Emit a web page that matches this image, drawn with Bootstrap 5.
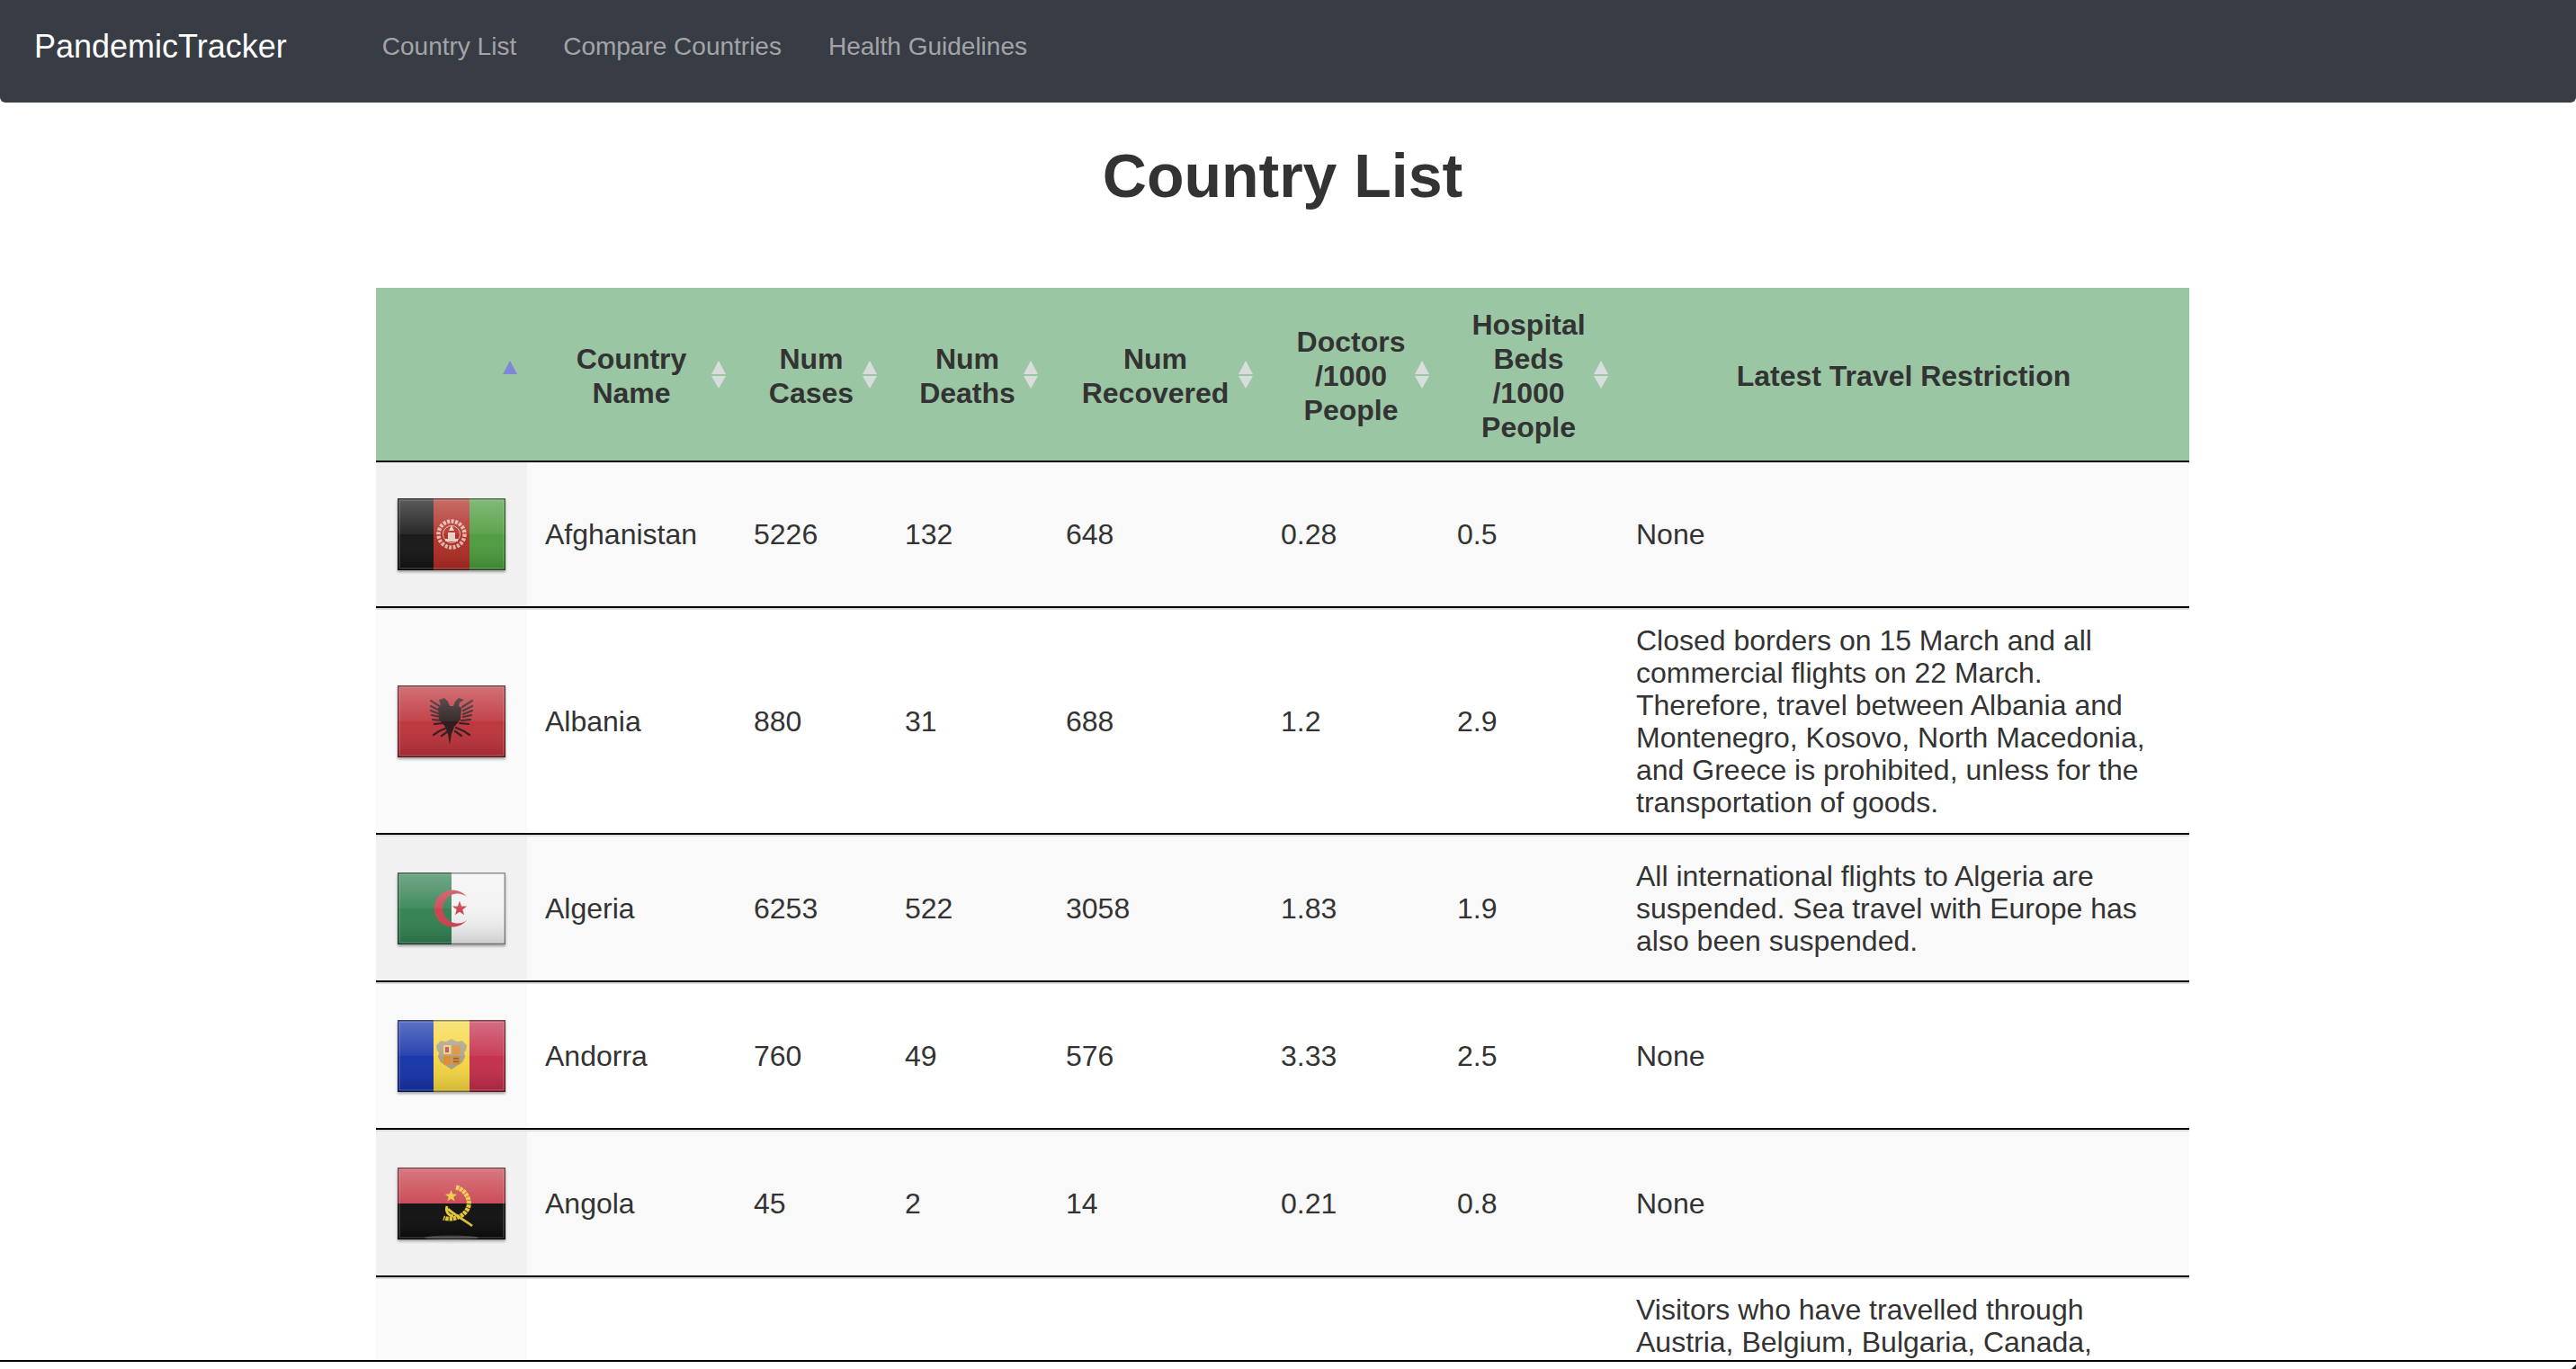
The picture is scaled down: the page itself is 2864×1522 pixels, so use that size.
<!DOCTYPE html>
<html lang="en">
<head>
    <meta charset="UTF-8">
    <meta name="viewport" content="width=device-width, initial-scale=1">
    <title>PandemicTracker - Country List</title>
    <link rel="stylesheet" href="https://cdn.jsdelivr.net/npm/bootstrap@5.3.0/dist/css/bootstrap.min.css">
    <style>
        html, body { height: 100%; }
        body {
            font-family: "Liberation Sans", Arial, sans-serif;
            color: #333;
            overflow: hidden;
        }
        .page-shell { height: 100vh; }
        .page-body { min-height: 0; overflow: hidden; }
        .window-edge { height: 10px; border-top: 2px solid #000; flex: none; }

        .top-nav {
            height: 114px;
            padding: 0 0 10px 38px;
            background-color: #383c44;
            border-radius: 0 0 6px 6px;
            flex: none;
        }
        .top-nav .navbar-brand { font-size: 36px; padding: 0; margin-right: 80px; }
        .top-nav .navbar-nav .nav-link { font-size: 28px; padding: 0 26px; }

        .content-wrap { width: 2016px; margin-left: 418px; }
        .page-title { font-size: 68px; font-weight: 700; line-height: 82px; margin: 40px 0 84px; color: #333; }

        .country-table {
            width: 2016px;
            table-layout: fixed;
            border-collapse: separate;
            border-spacing: 0;
            margin: 0;
            font-size: 32px;
            line-height: 36px;
            --bs-table-color: #333;
        }
        .country-table col:nth-child(1) { width: 168px; }
        .country-table col:nth-child(2) { width: 232px; }
        .country-table col:nth-child(3) { width: 168px; }
        .country-table col:nth-child(4) { width: 179px; }
        .country-table col:nth-child(5) { width: 239px; }
        .country-table col:nth-child(6) { width: 196px; }
        .country-table col:nth-child(7) { width: 199px; }
        .country-table col:nth-child(8) { width: 635px; }

        .country-table > thead > tr > th {
            position: relative;
            height: 194px;
            padding: 22px 36px 18px;
            line-height: 38px;
            text-align: center;
            vertical-align: middle;
            font-weight: 700;
            background-color: #9bc6a3;
            border-bottom: 2px solid #000;
        }
        .sort-both::before, .sort-both::after, .sort-up::before {
            content: "";
            position: absolute;
            right: 11px;
            border-left: 8px solid transparent;
            border-right: 8px solid transparent;
        }
        .sort-both::before, .sort-up::before { top: calc(50% - 15px); border-bottom: 15px solid #d8dedb; }
        .sort-both::after { top: calc(50% + 2px); border-top: 14px solid #d8dedb; }
        .sort-up::before { border-bottom-color: #7d88d8; }

        .country-table > tbody > tr > td {
            padding: 16px 20px;
            vertical-align: middle;
            background-color: #fff;
            border-top: 2px solid #ddd;
            border-bottom: 2px solid #000;
        }
        .country-table > tbody > tr:first-child > td { border-top: 0; }
        .country-table > tbody > tr:nth-child(odd) > td { background-color: #f9f9f9; }
        .country-table > tbody > tr > td:first-child { background-color: #fafafa; }
        .country-table > tbody > tr:nth-child(odd) > td:first-child { background-color: #f1f1f1; }
        .country-table > tbody > tr.cut-row > td { height: 300px; vertical-align: top; background-color: #fff; }
        .country-table > tbody > tr.cut-row > td:first-child { background-color: #fafafa; }

        .flag-img {
            display: block;
            width: 128px;
            height: 128px;
            filter: blur(.6px) drop-shadow(0 2px 1.5px rgba(0, 0, 0, .35));
        }
    </style>
</head>
<body>
    <svg class="position-absolute" width="0" height="0" aria-hidden="true">
        <defs>
            <linearGradient id="glossFill" x1="0" y1="0" x2="0" y2="1">
                <stop offset="0" stop-color="#fff" stop-opacity=".32"/>
                <stop offset=".5" stop-color="#fff" stop-opacity=".1"/>
                <stop offset=".5" stop-color="#fff" stop-opacity=".04"/>
                <stop offset="1" stop-color="#000" stop-opacity=".16"/>
            </linearGradient>
            <g id="flagGloss">
                <rect x="4" y="24" width="120" height="80" fill="url(#glossFill)"/>
                <rect x="6" y="26" width="116" height="76" fill="none" stroke="#fff" stroke-opacity=".2" stroke-width="1.5"/>
                <rect x="4.75" y="24.75" width="118.5" height="78.5" fill="none" stroke="#000" stroke-opacity=".42" stroke-width="1.5"/>
            </g>
        </defs>
    </svg>

    <div class="page-shell d-flex flex-column">
        <nav class="navbar navbar-expand navbar-dark top-nav">
            <a class="navbar-brand" href="#">PandemicTracker</a>
            <ul class="navbar-nav">
                <li class="nav-item"><a class="nav-link" href="#">Country List</a></li>
                <li class="nav-item"><a class="nav-link" href="#">Compare Countries</a></li>
                <li class="nav-item"><a class="nav-link" href="#">Health Guidelines</a></li>
            </ul>
        </nav>

        <div class="page-body flex-grow-1">
            <div class="content-wrap">
                <h1 class="page-title text-center">Country List</h1>
                <table class="table country-table">
                    <colgroup><col><col><col><col><col><col><col><col></colgroup>
                    <thead>
                        <tr>
                            <th class="sort-up"></th>
                            <th class="sort-both">Country Name</th>
                            <th class="sort-both">Num Cases</th>
                            <th class="sort-both">Num Deaths</th>
                            <th class="sort-both">Num Recovered</th>
                            <th class="sort-both">Doctors /1000 People</th>
                            <th class="sort-both">Hospital Beds /1000 People</th>
                            <th>Latest Travel Restriction</th>
                        </tr>
                    </thead>
                    <tbody>
                        <tr>
                            <td>
                                <svg class="flag-img" viewBox="0 0 128 128" role="img" aria-label="Flag of Afghanistan">
                                    <rect x="4" y="24" width="40" height="80" fill="#111"/>
                                    <rect x="44" y="24" width="40" height="80" fill="#ae2a22"/>
                                    <rect x="84" y="24" width="40" height="80" fill="#4a9a3a"/>
                                    <circle cx="64" cy="64" r="14.500" fill="none" stroke="#dfb8aa" stroke-width="4.500" stroke-dasharray="3 1.500"/>
                                    <circle cx="64" cy="64" r="9.500" fill="none" stroke="#dfb8aa" stroke-width="1"/>
                                    <path d="M64 54l3 6h-6zM57 69h14v3H57zM60 62h8v7h-8z" fill="#e9cfc4"/>
                                    <use href="#flagGloss"/>
                                </svg>
                            </td>
                            <td>Afghanistan</td><td>5226</td><td>132</td><td>648</td><td>0.28</td><td>0.5</td><td>None</td>
                        </tr>
                        <tr>
                            <td>
                                <svg class="flag-img" viewBox="0 0 128 128" role="img" aria-label="Flag of Albania">
                                    <rect x="4" y="24" width="120" height="80" fill="#bc2f37"/>
                                    <path d="M50 40l6-2 4 4 2 5h4l2-5 4-4 6 2-5 3-1 4 3 2-1 13-7 8-3 8-2 12-2-12-3-8-7-8-1-13 3-2-1-4z" fill="#241415"/>
                                    <g fill="none" stroke="#2b1718" stroke-width="2.200" stroke-linecap="round">
                                        <path d="M52 48L41 41M51 52L41 47M51 56L41 52M51 59L42 57M53 63L43 62M55 66L45 67"/>
                                        <path d="M76 48L87 41M77 52L87 47M77 56L87 52M77 59L86 57M75 63L85 62M73 66L83 67"/>
                                        <path d="M59 71L50 75L44 79M60 75L53 80M69 71L78 75L84 79M68 75L75 80"/>
                                    </g>
                                    <use href="#flagGloss"/>
                                </svg>
                            </td>
                            <td>Albania</td><td>880</td><td>31</td><td>688</td><td>1.2</td><td>2.9</td>
                            <td>Closed borders on 15 March and all commercial flights on 22 March. Therefore, travel between Albania and Montenegro, Kosovo, North Macedonia, and Greece is prohibited, unless for the transportation of goods.</td>
                        </tr>
                        <tr>
                            <td>
                                <svg class="flag-img" viewBox="0 0 128 128" role="img" aria-label="Flag of Algeria">
                                    <rect x="4" y="24" width="60" height="80" fill="#2f7f4f"/>
                                    <rect x="64" y="24" width="60" height="80" fill="#f2f2f2"/>
                                    <path d="M81 51A20.500 20.500 0 1 0 81 77A16.500 16.500 0 1 1 81 51Z" fill="#c8404c"/>
                                    <path d="M73 55.500l2.100 5.900 6.200.1-5 3.800 1.800 6-5.100-3.600-5.100 3.600 1.800-6-5-3.800 6.200-.1z" fill="#c8404c"/>
                                    <use href="#flagGloss"/>
                                </svg>
                            </td>
                            <td>Algeria</td><td>6253</td><td>522</td><td>3058</td><td>1.83</td><td>1.9</td>
                            <td>All international flights to Algeria are suspended. Sea travel with Europe has also been suspended.</td>
                        </tr>
                        <tr>
                            <td>
                                <svg class="flag-img" viewBox="0 0 128 128" role="img" aria-label="Flag of Andorra">
                                    <rect x="4" y="24" width="40" height="80" fill="#1230a8"/>
                                    <rect x="44" y="24" width="40" height="80" fill="#f6d63e"/>
                                    <rect x="84" y="24" width="40" height="80" fill="#c22a48"/>
                                    <path d="M47 52l5-5 6 1 6-3 6 3 6-1 5 5-1 6-2 2 1 5-3 6-6 4-6 4-6-4-6-4-3-6 1-5-2-2z" fill="#a89f86"/>
                                    <rect x="55" y="52" width="8.500" height="10" fill="#eccf6c"/>
                                    <rect x="65" y="52" width="8.500" height="10" fill="#dd8a2c"/>
                                    <rect x="55" y="63.500" width="8.500" height="10" fill="#dd8a2c"/>
                                    <rect x="65" y="63.500" width="8.500" height="10" fill="#d08a3a"/>
                                    <path d="M57 54h4v6h-4z" fill="#c2415a"/>
                                    <path d="M66 66h6v1.500h-6zM66 69.500h6v1.500h-6z" fill="#8f5a24"/>
                                    <use href="#flagGloss"/>
                                </svg>
                            </td>
                            <td>Andorra</td><td>760</td><td>49</td><td>576</td><td>3.33</td><td>2.5</td><td>None</td>
                        </tr>
                        <tr>
                            <td>
                                <svg class="flag-img" viewBox="0 0 128 128" role="img" aria-label="Flag of Angola">
                                    <rect x="4" y="24" width="120" height="40" fill="#c63a46"/>
                                    <rect x="4" y="64" width="120" height="40" fill="#0b0b0b"/>
                                    <ellipse cx="64" cy="102" rx="30" ry="2.500" fill="#fff" fill-opacity=".25"/>
                                    <g fill="none" stroke="#e8c832">
                                        <path d="M69 46C78 48 85 58 83 67C81 76 68 84 55 80" stroke-width="5" stroke-dasharray="3.500 .8"/>
                                        <path d="M60 70C66 76 78 82 87 89" stroke-width="2.800"/>
                                        <path d="M59 67C57 73 60 77 66 78" stroke-width="2.800"/>
                                    </g>
                                    <path d="M63.500 49l1.800 4.600 5 .1-4 3 1.400 4.800-4.200-2.800-4.200 2.800 1.400-4.800-4-3 5-.1z" fill="#e8c832"/>
                                    <use href="#flagGloss"/>
                                </svg>
                            </td>
                            <td>Angola</td><td>45</td><td>2</td><td>14</td><td>0.21</td><td>0.8</td><td>None</td>
                        </tr>
                        <tr class="cut-row">
                            <td></td><td></td><td></td><td></td><td></td><td></td><td></td>
                            <td>Visitors who have travelled through Austria, Belgium, Bulgaria, Canada,</td>
                        </tr>
                    </tbody>
                </table>
            </div>
        </div>

        <div class="window-edge bg-white d-flex justify-content-end align-items-end">
            <svg width="5" height="5" viewBox="0 0 5 5" aria-hidden="true"><path d="M5 0V5H0z" fill="#222"/></svg>
        </div>
    </div>

    <script src="https://cdn.jsdelivr.net/npm/bootstrap@5.3.0/dist/js/bootstrap.bundle.min.js"></script>
</body>
</html>
